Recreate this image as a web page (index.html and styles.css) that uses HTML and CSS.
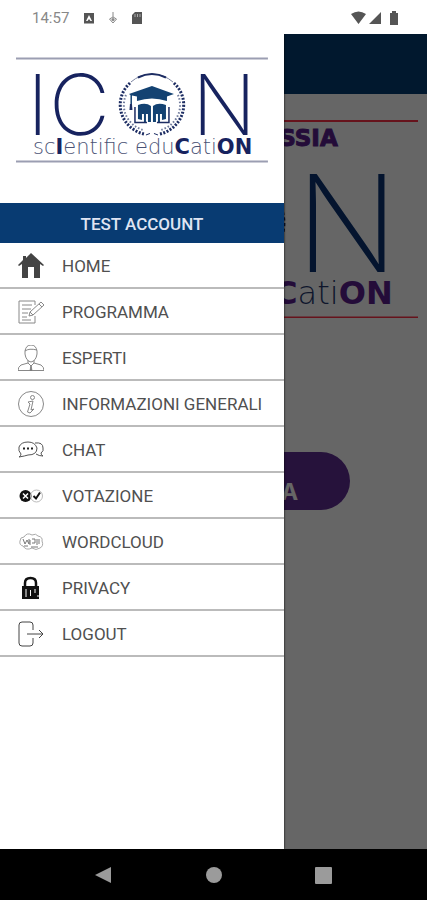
FILE: index.html
```html
<!DOCTYPE html>
<html lang="it">
<head>
<meta charset="utf-8">
<meta name="viewport" content="width=device-width, initial-scale=1">
<title>ICON Scientific Education</title>
<link rel="stylesheet" href="styles.css">
</head>
<body>
<svg class="defs" aria-hidden="true">
  <symbol id="emblem" viewBox="-34 -32 68 64">
    <g fill="none" stroke="#1c2c62">
      <path d="M-21-23A31 30 0 0 1 21-23" stroke-width="1" stroke="#7c86a2"/>
      <path d="M-14-27.500A31 30 0 0 1 14-27.500" stroke-width="2"/>
      <path d="M-22-22A31 30 0 0 0-8 29" stroke-width="3" stroke-dasharray="2 1.500"/>
      <path d="M22-22A31 30 0 0 1 8 29" stroke-width="3" stroke-dasharray="2 1.500"/>
      <path d="M-26-10A27 26 0 0 0-9 25" stroke="#6d7899" stroke-width="2" stroke-dasharray="1.500 2"/>
      <path d="M26-10A27 26 0 0 1 9 25" stroke="#6d7899" stroke-width="2" stroke-dasharray="1.500 2"/>
      <path d="M-6 30L-2 28.500M6 30L2 28.500" stroke-width="1"/>
    </g>
    <path d="M-23-11L0-19L22-11L15-8.500V-4Q0-9-15-4V-8.500L-20-9.500V-1H-21.500V-10Z" fill="#134272"/>
    <path d="M-22-1H-20L-19.500 5H-22.500Z" fill="#1c2c62"/>
    <path d="M-14 0Q-6-3-1 1V17H-4V9H-6V17H-8V9H-10V15L-14 14ZM14 0Q6-3 1 1V17H4V9H6V17H8V9H10V15L14 14Z" fill="#134272"/>
    <path d="M-17 2V17.500H-5M17 2V17.500H5" fill="none" stroke="#1c2c62" stroke-width="1.500"/>
  </symbol>
</svg>

<header class="status">
  <time class="clock">14:57</time>
  <svg class="status-icon" viewBox="0 0 12 12"><path fill="#555" fill-rule="evenodd" d="M1 1h10v10.500h-10ZM6 3L3 9h1.500L6 7l1.500 2H9Z"/></svg>
  <svg class="status-icon" viewBox="0 0 12 12"><path d="M6 0V5M2.500 7L6 5L9.500 7L6 11Z" fill="none" stroke="#888"/><circle cx="6" cy="7.500" r="1.500" fill="#888"/></svg>
  <svg class="status-icon" viewBox="0 0 12 12"><path d="M4 0H11V12H1V3Z" fill="#555"/><path d="M4 2v3M6.500 2v3M9 2v3" stroke="#aaa"/></svg>
  <svg class="signals" viewBox="0 0 48 14"><path d="M0 3Q7.500-2 15 3L7.500 13ZM18 13H30V1Z" fill="#555"/><path d="M39 2h2V0h4v2h2v12h-8Z" fill="#555"/></svg>
</header>

<main class="stage">
  <section class="page">
    <div class="page-bar"></div>
    <svg class="page-logo" viewBox="0 0 409 198" role="img" aria-label="ICON">
      <path d="M0 1H409M0 197H409" stroke="#ff3048" stroke-width="2"/>
      <text class="city" x="328" y="26" text-anchor="end">SSIA</text>
      <use href="#emblem" x="170" y="50" width="107" height="106"/>
      <text class="page-letter" x="286" y="152">N</text>
      <text class="page-tag" x="383" y="184" text-anchor="end"><tspan class="heavy">C</tspan>ati<tspan class="heavy">ON</tspan></text>
    </svg>
    <button class="page-button" type="button">A</button>
  </section>
  <div class="scrim"></div>

  <aside class="drawer">
    <svg class="logo" viewBox="0 0 252 106" role="img" aria-label="ICON scIentific eduCatiON">
      <path d="M0 1.500H252M0 104.500H252" stroke="#9b9eb2" stroke-width="2"/>
      <text class="letter" x="11" y="78">I</text>
      <text class="letter" x="33" y="78">C</text>
      <use href="#emblem" x="102" y="16" width="68" height="64"/>
      <text class="letter" x="176" y="78">N</text>
      <text class="tag" x="17" y="97">sc<tspan class="heavy">I</tspan>entific edu<tspan class="heavy">C</tspan>ati<tspan class="heavy">ON</tspan></text>
    </svg>
    <h1 class="account">TEST ACCOUNT</h1>
    <nav class="menu">
      <a href="#home"><svg viewBox="0 0 26 26"><path d="M13 0L26 12L25 13L22 11V25H16V14H10V25H4V11L1 13L0 12L5 7V3H8V5Z" fill="#444"/></svg>HOME</a>
      <a href="#programma"><svg viewBox="0 0 26 26" fill="none" stroke="#888"><path d="M17 2H1V24H17V17M17 2V6M4 6H14M4 10H13M4 14H10M4 18H9M4 21H13"/><path d="M11 17L12 13L23 3L26 6L15 16ZM21 5L24 8M12 13L15 16"/></svg>PROGRAMMA</a>
      <a href="#esperti"><svg viewBox="0 0 26 26" fill="none" stroke="#888"><path d="M7 6Q8 0 13 0T19 6V9Q18 16 13 17Q8 16 7 9ZM7 6Q11 3 19 5M10 15V18L3 20Q0 22 0 25.500H26Q26 22 23 20L16 18V15M10 18L13 21L16 18"/><path d="M13 20L12 26H14Z" fill="#444"/></svg>ESPERTI</a>
      <a href="#informazioni"><svg viewBox="0 0 26 26" fill="none" stroke="#888"><circle cx="13" cy="13" r="12.500"/><circle cx="14.500" cy="6.500" r="2"/><path d="M10 11L15 10L13 19L16 18L12 22L9.500 21L12 13Z"/></svg>INFORMAZIONI GENERALI</a>
      <a href="#chat"><svg viewBox="0 0 26 26" fill="none" stroke="#555"><path d="M3 17Q0 14 1 10Q3 5 10 5T19 11Q19 18 10 18Q7 19 1 20Q3 19 3 17ZM17 6Q25 5 25 11Q26 14 23 16Q23 18 25 19Q21 19 18 17"/><path d="M5 11.500h2M9 11.500h2M13 11.500h2" stroke="#222" stroke-width="2"/></svg>CHAT</a>
      <a href="#votazione"><svg viewBox="0 0 26 26"><circle cx="7.500" cy="13" r="6" fill="#111"/><path d="M5 10.500L10 15.500M10 10.500L5 15.500" stroke="#fff" stroke-width="1.500"/><circle cx="18.500" cy="13" r="6" fill="none" stroke="#bbb"/><path d="M15.500 13L18 15.500L22 9.500" fill="none" stroke="#111" stroke-width="2"/></svg>VOTAZIONE</a>
      <a href="#wordcloud"><svg viewBox="0 0 26 26" fill="none" stroke="#aaa"><path d="M5 17Q1 16 2 12Q2 8 6 8Q9 3 14 6Q18 4 20 7Q25 8 24 12Q26 17 22 19Q18 22 14 19Q8 22 5 17Z"/><path d="M5 10L7 15L9 11L11 15V10M12 11V16M14 10H17V14H14M19 10V16M21 10V15M6 17H10M13 18H20" stroke="#777"/></svg>WORDCLOUD</a>
      <a href="#privacy"><svg viewBox="0 0 26 26"><path d="M7 12V8Q7 3 12.500 3T18 8V12" fill="none" stroke="#111" stroke-width="2.500"/><path d="M4 11H21V24H4Z" fill="#111"/><path d="M8 14V22M12.500 15V21M17 14V18M19 21H21" stroke="#fff" stroke-width="1"/></svg>PRIVACY</a>
      <a href="#logout"><svg viewBox="0 0 26 26" fill="none" stroke="#444"><path d="M15 9V4Q15 1 12 1H4Q1 1 1 4V22Q1 25 4 25H12Q15 25 15 22V17M9 13H25M21 9L25 13L21 17"/></svg>LOGOUT</a>
    </nav>
  </aside>
</main>

<footer class="system">
  <button type="button" aria-label="Indietro"><svg viewBox="0 0 18 18"><path d="M0 9L16 1V17Z"/></svg></button>
  <button type="button" aria-label="Home"><svg viewBox="0 0 18 18"><circle cx="9" cy="9" r="8"/></svg></button>
  <button type="button" aria-label="Recenti"><svg viewBox="0 0 18 18"><rect y="1" width="17" height="17" rx="1"/></svg></button>
</footer>
</body>
</html>
```
FILE: styles.css
```css
* {
  box-sizing: border-box;
}

body {
  display: flex;
  flex-direction: column;
  min-height: 100vh;
  margin: 0;
  background: #fff;
  font-family: Roboto, sans-serif;
}

.defs {
  position: absolute;
  width: 0;
  height: 0;
}

.status {
  display: flex;
  align-items: center;
  gap: 12px;
  height: 34px;
  padding: 2px 28px 0 32px;
}

.clock {
  color: #888;
  font-size: 15px;
  margin-right: 2px;
}

.status-icon {
  width: 12px;
  height: 12px;
}

.signals {
  width: 48px;
  height: 14px;
  margin-left: auto;
}

.stage {
  position: relative;
  flex: 1;
  display: flex;
}

.page {
  flex: 1;
  display: flex;
  flex-direction: column;
  align-items: center;
  background: #fff;
}

.page-bar {
  align-self: stretch;
  height: 60px;
  background: #033c74;
}

.page-logo {
  width: 96%;
  margin-top: 26px;
}

.city {
  fill: #5b1f8e;
  stroke: #5b1f8e;
  font: bold 23px "DejaVu Sans", sans-serif;
}

.page-letter {
  fill: #0a3474;
  font: 200 134px Inter, sans-serif;
}

.page-tag {
  fill: #26386e;
  font: 200 32px "DejaVu Sans", sans-serif;
}

.page-tag .heavy {
  fill: #5b1f8e;
  font-weight: bold;
}

.page-button {
  width: 64%;
  height: 58px;
  margin-top: 134px;
  padding: 22px 52px 0 0;
  border: 0;
  border-radius: 29px;
  background: #5f2d94;
  color: #fff;
  font: bold 23px Inter, sans-serif;
  text-align: right;
}

.scrim {
  position: absolute;
  inset: 0;
  background: rgba(0, 0, 0, 0.6);
}

.drawer {
  position: absolute;
  inset: 0 auto 0 0;
  width: 66.5%;
  padding-top: 23px;
  background: #fff;
  box-shadow: 0 0 2px #000;
  clip-path: inset(0 -3px 0 0);
}

.logo {
  display: block;
  margin: 0 16px 40px;
}

.letter {
  fill: #17235f;
  font: 200 84px Inter, sans-serif;
}

.tag {
  fill: #4a5274;
  font: 200 21px "DejaVu Sans", sans-serif;
}

.tag .heavy {
  fill: #17235f;
  font-weight: bold;
}

.account {
  margin: 0;
  padding-top: 2px;
  background: #083b72;
  color: #dfe4f2;
  font-size: 17px;
  font-weight: 500;
  line-height: 38px;
  text-align: center;
}

.menu a {
  display: flex;
  align-items: center;
  gap: 18px;
  height: 46px;
  padding: 2px 0 0 18px;
  border-bottom: 2px solid #bbb;
  color: #505050;
  font-size: 17px;
  font-weight: 400;
  text-decoration: none;
  white-space: nowrap;
}

.menu svg {
  width: 26px;
  height: 26px;
}

.system {
  display: flex;
  justify-content: center;
  align-items: center;
  gap: 92px;
  height: 51px;
  background: #000;
}

.system button {
  display: flex;
  padding: 0;
  border: 0;
  background: none;
}

.system svg {
  width: 18px;
  height: 18px;
  fill: #9b9b9b;
}
```
